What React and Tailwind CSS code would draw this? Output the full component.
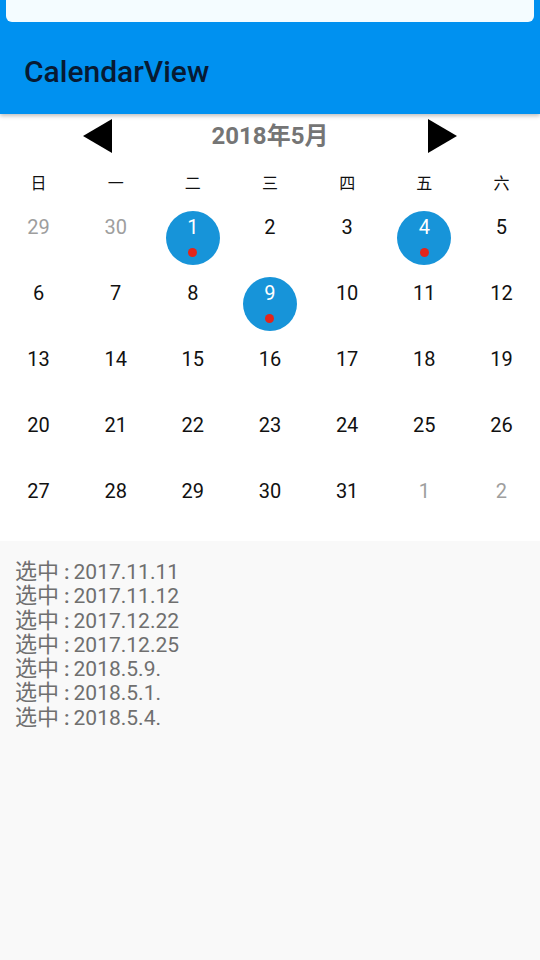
import React from "react";

const weeks = [
  [[29, "o"], [30, "o"], [1, "s"], [2], [3], [4, "s"], [5]],
  [[6], [7], [8], [9, "s"], [10], [11], [12]],
  [[13], [14], [15], [16], [17], [18], [19]],
  [[20], [21], [22], [23], [24], [25], [26]],
  [[27], [28], [29], [30], [31], [1, "o"], [2, "o"]],
];

const days = ["日", "一", "二", "三", "四", "五", "六"];
const picks = [
  "2017.11.11",
  "2017.11.12",
  "2017.12.22",
  "2017.12.25",
  "2018.5.9.",
  "2018.5.1.",
  "2018.5.4.",
];

function Cell({ n, t }) {
  const sel = t === "s";
  const other = t === "o";
  return (
    <div className="h-[66px] flex justify-center">
      <div
        className={`mt-[6px] w-[54px] h-[54px] rounded-full flex flex-col items-center ${
          sel ? "bg-[#1794d9]" : ""
        }`}
      >
        <div
          className={`mt-[6px] h-[20px] leading-[20px] text-[20px] ${
            sel ? "text-white" : other ? "text-[#9e9e9e]" : "text-[#111111]"
          }`}
        >
          {n}
        </div>
        {sel && <div className="mt-[11px] w-[9px] h-[9px] rounded-full bg-[#e3251b]" />}
      </div>
    </div>
  );
}

export default function App() {
  return (
    <div
      className="w-[540px] h-[960px] bg-[#f9f9f9] flex flex-col overflow-hidden"
      style={{ fontFamily: 'Roboto, "Noto Sans CJK SC", sans-serif' }}
    >
      <div className="relative z-10 h-[114px] bg-[#0091f0] px-[6px] shadow-[0_2px_4px_rgba(0,0,0,0.25)] flex flex-col">
        <div className="h-[22px] bg-[#f4fcff] rounded-b-[6px]" />
        <div className="pl-[18px] pt-[33px] text-[30px] leading-[34px] font-medium text-[#071a33]">
          CalendarView
        </div>
      </div>
      <div className="bg-white flex flex-col">
        <div className="h-[44px] flex items-center justify-between px-[83px]">
          <svg width="29" height="34" viewBox="0 0 29 34">
            <polygon points="29,0 29,34 0,17" fill="#000" />
          </svg>
          <div className="text-[24px] font-bold text-[#757575] leading-[28px]">2018年5月</div>
          <svg width="29" height="34" viewBox="0 0 29 34">
            <polygon points="0,0 0,34 29,17" fill="#000" />
          </svg>
        </div>
        <div className="grid grid-cols-7 pt-[16px] pb-[11px]">
          {days.map((d) => (
            <div key={d} className="text-center text-[16px] leading-[20px] text-[#111111]">
              {d}
            </div>
          ))}
        </div>
        <div className="pb-[6px]">
          {weeks.map((w, i) => (
            <div key={i} className="grid grid-cols-7">
              {w.map(([n, t], j) => (
                <Cell key={j} n={n} t={t} />
              ))}
            </div>
          ))}
        </div>
      </div>
      <div className="pt-[19px] px-[15px]">
        {picks.map((p) => (
          <div key={p} className="h-[24.3px] text-[21px] leading-[24.3px] text-[#6f6f6f] whitespace-nowrap">
            <span className="text-[22px]">选中</span>
            <span className="ml-[5px] font-medium">:</span>
            <span className="ml-[4px]">{p}</span>
          </div>
        ))}
      </div>
    </div>
  );
}
